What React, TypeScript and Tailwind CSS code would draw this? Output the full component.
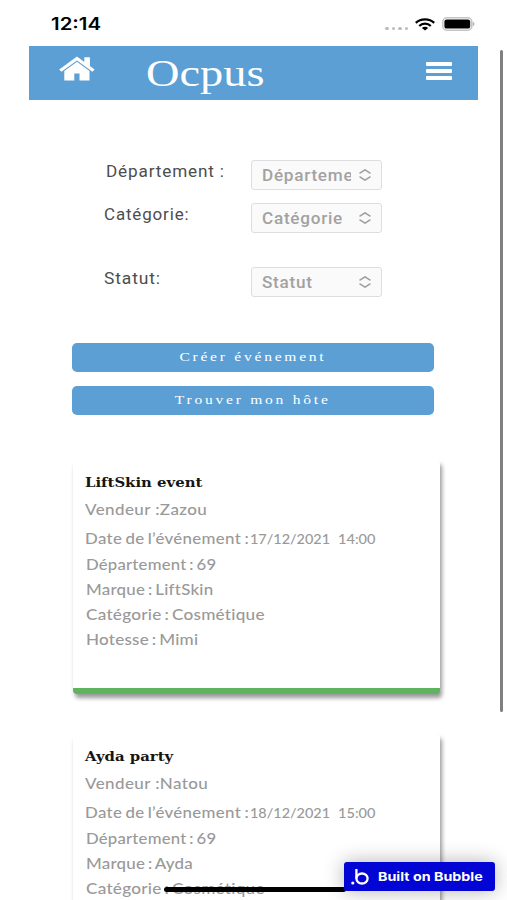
import { useState } from 'react';

interface EventData {
  id: number;
  title: string;
  seller: string;
  date: string;
  time: string;
  department: string;
  brand: string;
  category: string;
  hostess: string;
}

interface FilterSelectProps {
  placeholder: string;
}

const events: EventData[] = [
  {
    id: 1,
    title: 'LiftSkin event',
    seller: 'Zazou',
    date: '17/12/2021',
    time: '14:00',
    department: '69',
    brand: 'LiftSkin',
    category: 'Cosmétique',
    hostess: 'Mimi',
  },
  {
    id: 2,
    title: 'Ayda party',
    seller: 'Natou',
    date: '18/12/2021',
    time: '15:00',
    department: '69',
    brand: 'Ayda',
    category: 'Cosmétique',
    hostess: 'Mimi',
  },
];

function StatusBar() {
  return (
    <div className="flex h-[46px] shrink-0 items-start justify-between pl-[51px] pr-[32px]">
      <span className="mt-[14px] origin-left scale-x-[1.2] font-['Inter',sans-serif] text-[17px] leading-5 font-semibold text-black">
        12:14
      </span>
      <div className="mt-[17px] flex items-center">
        <div className="mt-[9px] flex gap-[3px]">
          <span className="h-[3px] w-[3.5px] rounded-full bg-[#bdbdbd]" />
          <span className="h-[3px] w-[3.5px] rounded-full bg-[#bdbdbd]" />
          <span className="h-[3px] w-[3.5px] rounded-full bg-[#bdbdbd]" />
          <span className="h-[3px] w-[3.5px] rounded-full bg-[#bdbdbd]" />
        </div>
        <svg className="ml-[7px] h-[13px] w-5" viewBox="0 0 20 13" fill="none" stroke="#000" strokeWidth="2.2">
          <path d="M0.8 4.9 C5.6 0.2 14.4 0.2 19.2 4.9" />
          <path d="M4.2 8 C7.4 4.9 12.6 4.9 15.8 8" />
          <path d="M10 12.4 L6.9 10 C8.5 8.4 11.5 8.4 13.1 10 Z" fill="#000" stroke="none" />
        </svg>
        <svg className="ml-[7px] h-[14px] w-[33px]" viewBox="0 0 33 14">
          <rect x="0.8" y="0.8" width="29" height="12.4" rx="4" fill="#fff" stroke="#c4c4c4" strokeWidth="1.6" />
          <rect x="2.4" y="2.4" width="25.8" height="9.2" rx="2.2" fill="#000" />
          <path d="M30.9 4.8 C33 5.6 33 8.4 30.9 9.2 Z" fill="#b5b5b5" />
        </svg>
      </div>
    </div>
  );
}

function Header() {
  return (
    <header className="mx-[29px] flex h-[54px] shrink-0 items-start bg-[#5b9fd5] text-white">
      <svg className="mt-[10px] ml-[30px] h-[25px] w-[36px]" viewBox="0 0 36 25" fill="#fff">
        <path d="M18 0.6 L0.2 13.4 L2.4 15.8 L18 4.6 L33.4 15.8 L35.6 13.4 L30.9 10 V1.2 H25.3 V5.9 Z" />
        <path d="M18 5.7 L5.3 14.9 V24.6 H15.3 V17.6 H20.5 V24.6 H30.5 V14.9 Z" />
      </svg>
      <h1 className="ml-[51px] origin-left scale-x-[1.22] font-['Liberation_Serif',serif] text-[38px] leading-[54px]">
        Ocpus
      </h1>
      <button className="mt-[16px] mr-[26px] ml-auto flex flex-col gap-[3px]" aria-label="Menu">
        <span className="h-1 w-[26px] rounded-[1px] bg-white" />
        <span className="h-1 w-[26px] rounded-[1px] bg-white" />
        <span className="h-1 w-[26px] rounded-[1px] bg-white" />
      </button>
    </header>
  );
}

function FilterSelect({ placeholder }: FilterSelectProps) {
  return (
    <button className="flex h-[30px] w-[131px] items-center justify-between rounded-[3px] border border-[#dedede] bg-[#fafafa] pr-[10px] pl-[10px]">
      <span className="w-[89px] overflow-hidden pt-px text-left font-['Roboto',sans-serif] text-[16px] leading-5 font-medium text-[#a2a2a2]">
        <span className="inline-block origin-left scale-x-[1.07] tracking-[0.7px]">{placeholder}</span>
      </span>
      <svg className="h-3 w-3 shrink-0" viewBox="0 0 12 12" fill="none" stroke="#a0a0a0" strokeWidth="1.5">
        <path d="M0.5 4.4 L6 0.8 L11.5 4.4" />
        <path d="M0.5 7.6 L6 11.2 L11.5 7.6" />
      </svg>
    </button>
  );
}

function EventCard({ event }: { event: EventData }) {
  return (
    <article className="h-[234px] w-[367px] shrink-0 rounded-[4px] border-b-[6px] border-[#5fb35f] bg-white pt-[14px] pl-3 font-['Lato',sans-serif] text-[14.5px] font-medium whitespace-nowrap text-[#999] shadow-[2px_4px_4px_rgba(0,0,0,0.4)]">
      <h2 className="h-[26px] w-fit origin-left scale-x-[1.19] font-['DejaVu_Serif',serif] text-[12.5px] leading-[18px] font-bold text-[#151515]">
        {event.title}
      </h2>
      <p className="h-[29px] w-fit origin-left scale-x-[1.17] leading-5 tracking-[0.35px]">Vendeur :{event.seller}</p>
      <div className="flex h-[26px] leading-5">
        <p className="w-[165px]">
          <span className="inline-block origin-left scale-x-[1.16] tracking-[0.3px] [word-spacing:-1.2px]">
            Date de l’événement :
          </span>
        </p>
        <p className="w-[88px]">
          <span className="inline-block origin-left scale-x-[1.03] text-[14px]">{event.date}</span>
        </p>
        <p className="text-[14px]">
          <span className="inline-block origin-left scale-x-[1.04]">{event.time}</span>
        </p>
      </div>
      <div className="ml-px leading-5 tracking-[0.2px] [word-spacing:-1.4px]">
        <p className="h-[25px] w-fit origin-left scale-x-[1.15]">Département : {event.department}</p>
        <p className="h-[24.5px] w-fit origin-left scale-x-[1.165]">Marque : {event.brand}</p>
        <p className="h-[25px] w-fit origin-left scale-x-[1.185]">Catégorie : {event.category}</p>
        <p className="h-[25px] w-fit origin-left scale-x-[1.175]">Hotesse : {event.hostess}</p>
      </div>
    </article>
  );
}

function BubbleBadge() {
  return (
    <a className="absolute top-[862px] left-[344px] flex h-[29px] w-[151px] items-center rounded-[3px] bg-[#0205d3] pl-[7px] text-white shadow-[0_0_20px_rgba(0,0,0,0.3)]">
      <svg className="h-4 w-[18px]" viewBox="0 0 18 16" fill="none" stroke="#fff" strokeWidth="2.3">
        <path d="M5.4 0 V9.5" />
        <ellipse cx="11" cy="9.5" rx="5.6" ry="5" />
        <circle cx="1.8" cy="14" r="1.6" fill="#fff" stroke="none" />
      </svg>
      <span className="ml-[9px] origin-left scale-x-[1.19] font-['Inter',sans-serif] text-[12px] font-bold whitespace-nowrap">
        Built on Bubble
      </span>
    </a>
  );
}

export default function App() {
  const [items] = useState<EventData[]>(events);

  return (
    <div className="relative flex h-[900px] w-[507px] flex-col overflow-hidden bg-white">
      <StatusBar />
      <Header />

      {/* Filters */}
      <section className="mt-[60px] ml-[104px] flex flex-col font-['Roboto',sans-serif] text-[16px] leading-5 text-[#4d4d4d]">
        <div className="flex h-[43px] items-start">
          <label className="w-[147px] pt-[2px] pl-[2px]">
            <span className="inline-block origin-left scale-x-[1.07] tracking-[0.8px]">Département :</span>
          </label>
          <FilterSelect placeholder="Département" />
        </div>
        <div className="flex h-[64px] items-start">
          <label className="w-[147px] pt-[2px]">
            <span className="inline-block origin-left scale-x-[1.06] tracking-[0.8px]">Catégorie:</span>
          </label>
          <FilterSelect placeholder="Catégorie" />
        </div>
        <div className="flex h-[30px] items-start">
          <label className="w-[147px] pt-[2px]">
            <span className="inline-block origin-left scale-x-[1.09] tracking-[0.8px]">Statut:</span>
          </label>
          <FilterSelect placeholder="Statut" />
        </div>
      </section>

      {/* Actions */}
      <section className="mt-[46px] ml-[72px] flex w-[362px] flex-col gap-[14px] font-['Liberation_Serif',serif] text-[13.5px] text-white">
        <button className="h-[29px] rounded-[5px] bg-[#5b9fd5] pb-px">
          <span className="inline-block scale-x-[1.15] tracking-[2.4px]">Créer événement</span>
        </button>
        <button className="h-[29px] rounded-[5px] bg-[#5b9fd5] pb-px">
          <span className="inline-block scale-x-[1.15] tracking-[2.4px]">Trouver mon hôte</span>
        </button>
      </section>

      {/* Events */}
      <section className="mt-[45px] ml-[73px] flex flex-col gap-[40px]">
        {items.map((event) => (
          <EventCard key={event.id} event={event} />
        ))}
      </section>

      {/* Scrollbar and home indicator */}
      <div className="absolute top-[50px] left-[500px] h-[662px] w-[3px] rounded-full bg-[#808080]" />
      <div className="absolute top-[887px] left-[164px] h-[5px] w-[182px] rounded-full bg-black" />
      <BubbleBadge />
    </div>
  );
}
